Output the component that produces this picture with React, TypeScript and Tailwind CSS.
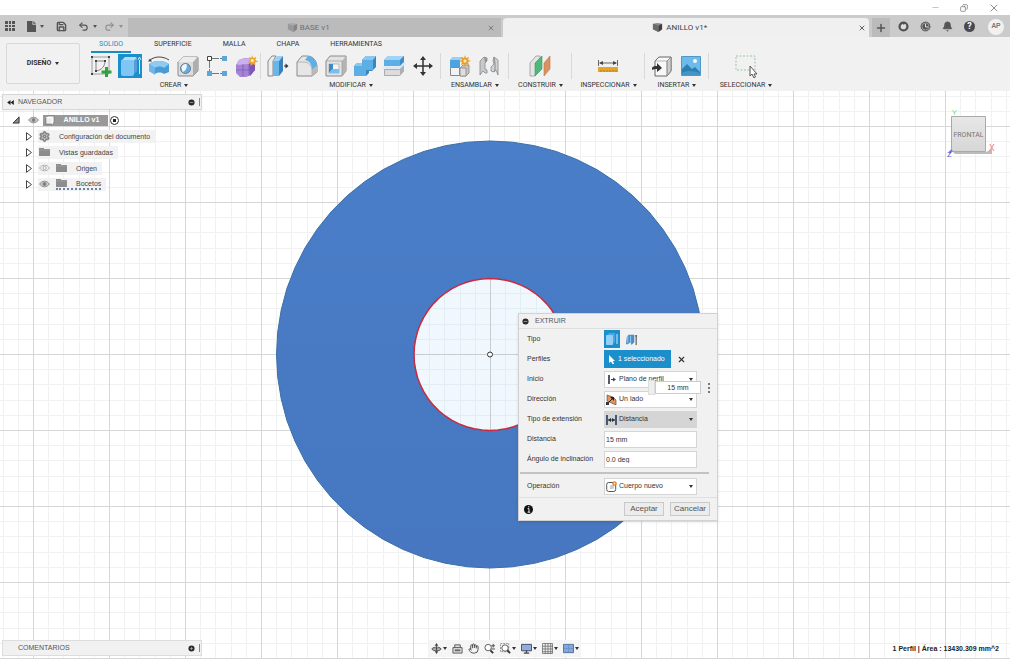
import { Bell, Copy, Hand, Minus, Plus, Redo2, Save, Settings, Undo2, X } from 'lucide-react';
import { useState } from 'react';
import type { ReactNode } from 'react';

const ICON = 'block h-6 w-6 shrink-0';

function Caret({ className = '' }: { className?: string }) {
  return (
    <svg viewBox="0 0 4 3" className={`h-[3px] w-1 shrink-0 ${className}`} aria-hidden="true">
      <path d="M0 0h4L2 3z" fill="currentColor" />
    </svg>
  );
}

/* ---------- ribbon icons ---------- */

const SketchIcon = () => (
  <svg viewBox="0 0 24 24" className={ICON} fill="none">
    <path d="M3 3h17v17H3z" stroke="#8a8a8a" strokeWidth=".8" />
    <path d="M7 7h9M7 7v10M16 7c0 5-3 9-9 10" stroke="#777" strokeWidth=".9" />
    <path d="M2 2h2v2H2zM19 2h2v2h-2zM2 19h2v2H2zM6 6h2v2H6zM15 6h2v2h-2zM6 16h2v2H6z" fill="#444" />
    <path d="M16 13h3v3.500h3.500v3H19V23h-3v-3.500h-3.500v-3H16z" fill="#2fa13e" />
  </svg>
);

const ExtrudeIcon = () => (
  <svg viewBox="0 0 24 24" className={ICON}>
    <path d="M3 7l4-4h10q2 0 2 2l-3 4z" fill="#b3ddf9" />
    <path d="M14 8l5-4v13l-4 4z" fill="#549fd6" />
    <rect x="3" y="6" width="13" height="16" rx="2" fill="#80c6f5" />
    <path d="M21.500 20V6M20 6l1.500-3L23 6" stroke="#cdeafd" fill="none" />
  </svg>
);

const RevolveIcon = () => (
  <svg viewBox="0 0 24 24" className={ICON}>
    <path d="M2 10c5-4 15-4 20 0v8l-5 2c-2-2-7-2-9 0l-6-3z" fill="#4a9ad4" />
    <path d="M2 10c5-4 15-4 20 0l-5 4c-2-2-7-2-9 0z" fill="#8dcbf3" />
    <path d="M2 10l6 4v7l-6-4z" fill="#6cb6ea" />
    <path d="M3 6c5-4 13-4 19 0" stroke="#444" fill="none" />
    <path d="M1 7.500l2-3 2 3z" fill="#444" />
  </svg>
);

const HoleIcon = () => (
  <svg viewBox="0 0 24 24" className={ICON}>
    <path d="M2 8l5-5h14q1 0 1 1v13l-5 5H3q-1 0-1-1z" fill="#dcdcdc" stroke="#8a8a8a" />
    <path d="M17 8l5-5v14l-5 5z" fill="#aeaeae" />
    <path d="M2 8l5-5h14l-4 5z" fill="#ececec" />
    <circle cx="9.500" cy="14.500" r="5" fill="#61ade0" stroke="#6d7d88" />
    <path d="M5.500 13a5 5 0 0 1 5-3c1 4-1 7-4 8z" fill="#f0f8fd" />
  </svg>
);

const PatternIcon = () => (
  <svg viewBox="0 0 24 24" className={ICON} fill="none">
    <path d="M4.500 5v14M5 4.500h14M5 19.500h14" stroke="#777" strokeDasharray="9 1" />
    <path d="M2.500 2.500h4v4h-4z" fill="#fff" stroke="#444" />
    <path d="M17 2h5v5h-5zM17 17h5v5h-5zM2 17h5v5H2z" fill="#5fa6d8" />
  </svg>
);

const FormIcon = () => (
  <svg viewBox="0 0 24 24" className={ICON}>
    <path d="M2 11l3-5 6-2h5l5 4v8l-4 5-5 2H6l-4-4z" fill="#a584d6" />
    <path d="M3 9l3-4 9-1 3 4-4 2-10 1z" fill="#c9b0ee" />
    <path d="M15 10l6-3v9l-5 6z" fill="#7d56b8" />
    <path d="M9 10v12M2 16h13l6-4M15 10v12" stroke="#7450a8" strokeWidth=".6" fill="none" />
    <path d="M18 1l1.300 3 3-1-1 3 2.700 1.500-3 1 .5 3-2.500-1.500L16.500 12v-3l-3-1 2.500-2-1-3 2.500 1z" fill="#eda32c" />
    <circle cx="18.300" cy="6.500" r="1.600" fill="#fff0c7" />
  </svg>
);

const PressPullIcon = () => (
  <svg viewBox="0 0 24 24" className={ICON}>
    <path d="M2 7l4-5h4L7 7v15H2z" fill="#eee" stroke="#888" />
    <path d="M7 7l4-5h6l-4 5z" fill="#9bd1f5" />
    <path d="M7 7h6v15H7z" fill="#66b5eb" />
    <path d="M13 7l4-5v15l-4 5z" fill="#3a83ba" />
    <path d="M18 12h3" stroke="#333" />
    <path d="M19.500 9.500L22.500 12l-3 2.500z" fill="#333" />
  </svg>
);

const FilletIcon = () => (
  <svg viewBox="0 0 24 24" className={ICON}>
    <path d="M2 8l5-6h5c6 0 10 5 10 11v5l-5 4H2z" fill="#e6e6e6" stroke="#8a8a8a" />
    <path d="M10 6l3-4c5 0 9 5 9 10l-5 4c0-5-2-9-7-10z" fill="#62aee4" />
    <path d="M17 16l5-4v6l-5 4z" fill="#bbb" />
    <path d="M2 8h7c5 0 8 4 8 9v5" stroke="#aaa" fill="none" strokeWidth=".8" />
  </svg>
);

const ShellIcon = () => (
  <svg viewBox="0 0 24 24" className={ICON}>
    <path d="M2 7l4-5h16v15l-4 5H2z" fill="#e3e3e3" stroke="#8a8a8a" />
    <path d="M18 7l4-5v15l-4 5z" fill="#b4b4b4" />
    <path d="M2 7h16v15" stroke="#999" fill="none" strokeWidth=".7" />
    <path d="M5 10h10v9H5z" fill="#f4f4f4" stroke="#999" strokeWidth=".6" />
    <path d="M5 10l4 0v5l-4 4z" fill="#3d8cc5" />
    <path d="M9 15h6v4H5z" fill="#78bfee" />
  </svg>
);

const CombineIcon = () => (
  <svg viewBox="0 0 24 24" className={ICON}>
    <path d="M1 12l3-3h5V6l4-4h10v11l-4 4h-3v2l-3 3H1z" fill="#3c86bf" />
    <path d="M1 12l3-3h5V6l4-4h10l-3 4v7h-4z" fill="#8ac8f1" />
    <path d="M1 12h8V6h11v10h-7v6H1z" fill="#5caee5" />
  </svg>
);

const SplitIcon = () => (
  <svg viewBox="0 0 24 24" className={ICON}>
    <path d="M2 6l4-4h16v6l-4 4H2z" fill="#5caee5" />
    <path d="M2 6l4-4h16l-4 4z" fill="#a0d4f6" />
    <path d="M18 6l4-4v6l-4 4z" fill="#3f8cc6" />
    <path d="M2.500 15.500h15l4-4v6l-4 4h-15z" fill="#dcdcdc" stroke="#aaa" />
    <path d="M18 15l4-4v6l-4 5z" fill="#b0b0b0" />
    <path d="M1 13.500h17l5-5" fill="none" stroke="#d5e8f5" strokeWidth="2" />
  </svg>
);

const MoveIcon = () => (
  <svg viewBox="0 0 24 24" className={ICON}>
    <path d="M12 4v16M4 12h16" stroke="#333" strokeWidth="1.500" />
    <path d="M12 2l3 4H9zM12 22l3-4H9zM2 12l4-3v6zM22 12l-4-3v6z" fill="#333" />
  </svg>
);

const ComponentIcon = () => (
  <svg viewBox="0 0 24 24" className={ICON}>
    <path d="M2 6l3-3h10l-3 3v7H2z" fill="#4da3df" />
    <path d="M2 6l3-3h10l-3 3z" fill="#9ad0f4" />
    <path d="M2.500 13.500h9v8h-9z" fill="#f3f3f3" stroke="#888" />
    <path d="M12 14l3-3h6v8l-3 3h-6z" fill="#c4c4c4" stroke="#888" strokeWidth=".8" />
    <path d="M12 14h6v8h-6z" fill="#dedede" stroke="#888" strokeWidth=".8" />
    <path d="M17 1l1 3 3-1-1 3 3 1-3 1 1 3-3-1-1 3-1-3-3 1 1-3-3-1 3-1-1-3 3 1z" fill="#e9a02b" />
    <circle cx="17" cy="7" r="1.500" fill="#ffefc4" />
  </svg>
);

const JointIcon = () => (
  <svg viewBox="0 0 24 24" className={ICON}>
    <path d="M3 7l4-4 3 1v3l-2 2v6l2 1v3H8l-2-2-3 4z" fill="#c6cacd" stroke="#888" strokeWidth=".8" />
    <path d="M7 3l3 1v3L8 9z" fill="#929699" />
    <path d="M21 6l-4-3-1 4 1 3-3 3v4l3 1 2-2 2 5z" fill="#d2d5d8" stroke="#888" strokeWidth=".8" />
    <path d="M17 3l1 6v7l-1 2" fill="none" stroke="#888" />
  </svg>
);

const PlaneIcon = () => (
  <svg viewBox="0 0 24 24" className={ICON}>
    <path d="M2 9l6-7h4v14l-5 6H2z" fill="#e4e4e4" stroke="#999" strokeWidth=".8" />
    <path d="M7 9l7-7v13l-7 7z" fill="#4fb779" stroke="#3d9361" strokeWidth=".6" />
    <path d="M16 9l6-7v13l-6 7z" fill="#dc9163" stroke="#bd7649" strokeWidth=".6" />
  </svg>
);

const MeasureIcon = () => (
  <svg viewBox="0 0 24 24" className={ICON}>
    <path d="M2.500 6v6M21.500 6v6M4 9h16" stroke="#666" fill="none" />
    <path d="M3 9l4-2v4zM21 9l-4-2v4z" fill="#444" />
    <path d="M2 13h20v5H2z" fill="#e5a329" />
    <path d="M5 16v2M8 16v2M11 16v2M14 16v2M17 16v2M20 16v2" stroke="#a87919" strokeWidth=".8" />
  </svg>
);

const InsertIcon = () => (
  <svg viewBox="0 0 24 24" className={ICON}>
    <path d="M5 7l4-4h12v14l-4 5H5z" fill="#f8f8f8" stroke="#666" />
    <path d="M17 7l4-4v14l-4 5z" fill="#ccc" stroke="#777" strokeWidth=".7" />
    <path d="M5 7h12v15" stroke="#999" fill="none" strokeWidth=".7" />
    <path d="M2 16v-2c1-2 3-2 5-2V9l5 5-5 4v-3c-2 0-4 0-5 1z" fill="#333" />
  </svg>
);

const ImageIcon = () => (
  <svg viewBox="0 0 24 24" className={ICON}>
    <path d="M2.500 2.500h19v19h-19z" fill="#6dbbea" stroke="#5097c5" />
    <circle cx="16" cy="7" r="2" fill="#f2f9ff" />
    <path d="M3 15l5-5 5 5 3-2 5 5v3H3z" fill="#2b7fb3" />
    <path d="M3 19c5-3 12-2 18 0v2H3z" fill="#4494c6" />
  </svg>
);

const SelectIcon = () => (
  <svg viewBox="0 0 24 24" className={ICON} fill="none">
    <path d="M2 2h19v14H2z" stroke="#9cc5a6" strokeDasharray="2 1.500" />
    <path d="M16 12v10l2-2 2 4 1.500-1-1.500-3h3z" fill="#fff" stroke="#555" />
  </svg>
);

interface Tool {
  label: string;
  icon: ReactNode;
  active?: boolean;
}

interface ToolGroup {
  name: string;
  width: string;
  tools: Tool[];
}

const groups: ToolGroup[] = [
  {
    name: 'CREAR',
    width: 'w-[174px]',
    tools: [
      { label: 'Crear boceto', icon: <SketchIcon /> },
      { label: 'Extruir', icon: <ExtrudeIcon />, active: true },
      { label: 'Revolución', icon: <RevolveIcon /> },
      { label: 'Agujero', icon: <HoleIcon /> },
      { label: 'Patrón', icon: <PatternIcon /> },
      { label: 'Crear forma', icon: <FormIcon /> },
    ],
  },
  {
    name: 'MODIFICAR',
    width: 'w-[180px]',
    tools: [
      { label: 'Pulsar/tirar', icon: <PressPullIcon /> },
      { label: 'Empalme', icon: <FilletIcon /> },
      { label: 'Vaciado', icon: <ShellIcon /> },
      { label: 'Combinar', icon: <CombineIcon /> },
      { label: 'Dividir', icon: <SplitIcon /> },
      { label: 'Desplazar', icon: <MoveIcon /> },
    ],
  },
  {
    name: 'ENSAMBLAR',
    width: 'w-[68px]',
    tools: [
      { label: 'Nuevo componente', icon: <ComponentIcon /> },
      { label: 'Unión', icon: <JointIcon /> },
    ],
  },
  { name: 'CONSTRUIR', width: 'w-[63px]', tools: [{ label: 'Plano', icon: <PlaneIcon /> }] },
  { name: 'INSPECCIONAR', width: 'w-[73px]', tools: [{ label: 'Medir', icon: <MeasureIcon /> }] },
  {
    name: 'INSERTAR',
    width: 'w-[64px]',
    tools: [
      { label: 'Insertar derivado', icon: <InsertIcon /> },
      { label: 'Imagen', icon: <ImageIcon /> },
    ],
  },
  { name: 'SELECCIONAR', width: 'w-[74px]', tools: [{ label: 'Seleccionar', icon: <SelectIcon /> }] },
];

const ribbonTabs = ['SOLIDO', 'SUPERFICIE', 'MALLA', 'CHAPA', 'HERRAMIENTAS'];

function TitleBar() {
  return (
    <div className="flex h-[15px] items-center justify-end gap-5 bg-white pr-[10px] text-[#666]">
      <button aria-label="Minimizar"><Minus size={9} strokeWidth={1.5} className="text-[#999]" /></button>
      <button aria-label="Restaurar"><Copy size={8} strokeWidth={2} className="-scale-x-100" /></button>
      <button aria-label="Cerrar"><X size={12} strokeWidth={1.5} /></button>
    </div>
  );
}

function DocCube({ dark }: { dark?: boolean }) {
  return (
    <svg viewBox="0 0 12 12" className="h-[11px] w-[11px]" aria-hidden="true">
      <path d="M1 2l5-1 5 1v6l-4 3-6-3z" fill={dark ? '#888' : '#aaa'} />
      <path d="M7 4l4-2v6l-4 3z" fill={dark ? '#3f3f3f' : '#858585'} />
      <path d="M1 2l6 2v7L1 8z" fill={dark ? '#6a6a6a' : '#999'} />
    </svg>
  );
}

const SaveGlyph = () => <Save size={11} strokeWidth={3} />;

function DocumentBar() {
  return (
    <header className="flex h-[22px] items-stretch bg-[#cbcbcb] pt-[3px] text-[#555]">
      <div className="flex w-32 shrink-0 items-center pb-[3px] pl-[5px]">
        <button aria-label="Panel de datos">
          <svg viewBox="0 0 10 10" className="h-[10px] w-[10px]" fill="#555">
            <path d="M0 0h3v3H0zM4 0h2v3H4zM7 0h3v3H7zM0 4h3v2H0zM4 4h2v2H4zM7 4h3v2H7zM0 7h3v3H0zM4 7h2v3H4zM7 7h3v3H7z" />
          </svg>
        </button>
        <button aria-label="Archivo" className="ml-3 flex items-center gap-1">
          <svg viewBox="0 0 10 12" className="h-[11px] w-[9px]"><path d="M0 0h6v4h4v8H0zM7 0l3 3H7z" fill="#555" /></svg>
          <Caret />
        </button>
        <button aria-label="Guardar" className="ml-3"><SaveGlyph /></button>
        <button aria-label="Deshacer" className="ml-[11px] flex items-center gap-1">
          <Undo2 size={11} strokeWidth={2.5} /><Caret />
        </button>
        <button aria-label="Rehacer" className="ml-[7px] flex items-center gap-1 text-[#909090]">
          <Redo2 size={11} strokeWidth={2.5} /><Caret />
        </button>
      </div>
      <div className="flex min-w-0 flex-1 items-center bg-[#bbb] px-[6px] text-[8px] text-[#707070]">
        <button className="flex flex-1 items-center justify-center gap-[2px] pr-1"><DocCube />BASE v1</button>
        <button aria-label="Cerrar BASE v1"><X size={8} strokeWidth={2.5} /></button>
      </div>
      <div className="ml-[2px] flex min-w-0 flex-1 items-center rounded-t-sm bg-[#f0f0f0] px-[3px] text-[8px] text-[#444]">
        <button className="flex flex-1 items-center justify-center gap-[3px] pr-1"><DocCube dark />ANILLO v1*</button>
        <button aria-label="Cerrar ANILLO v1"><X size={8} strokeWidth={2.5} /></button>
      </div>
      <div className="flex shrink-0 items-center pl-[3px]">
        <button aria-label="Nuevo diseño" className="flex h-full w-[18px] items-center justify-center bg-[#bbb]">
          <Plus size={12} strokeWidth={3} />
        </button>
        <div className="flex items-center gap-[11px] pr-[6px] pb-[2px] pl-2">
          <button aria-label="Extensiones">
            <svg viewBox="0 0 12 12" className="h-[11px] w-[11px]">
              <circle cx="6" cy="6" r="5.500" fill="#505050" />
              <path d="M3 5l2-2 1 1 2-1 1 2v2L7.500 9h-3L3 7.500z" fill="#ddd" />
            </svg>
          </button>
          <button aria-label="Estado de trabajos">
            <svg viewBox="0 0 12 12" className="h-[11px] w-[11px]">
              <circle cx="6" cy="6" r="5" fill="#555" stroke="#555" strokeDasharray="1.500 1" />
              <circle cx="6" cy="6" r="3.800" fill="none" stroke="#bbb" strokeWidth=".7" />
              <path d="M6 3v3.500h3" fill="none" stroke="#eee" />
            </svg>
          </button>
          <button aria-label="Notificaciones"><Bell size={11} fill="currentColor" strokeWidth={2} /></button>
          <button aria-label="Ayuda" className="h-[11px] w-[11px] rounded-full bg-[#4a4a4a] text-center text-[9px] leading-[11px] font-bold text-white">?</button>
          <button aria-label="Perfil de usuario" className="-my-px ml-[2px] h-4 w-4 rounded-full bg-[#f1f1f1] text-[7px] text-[#444]">AP</button>
        </div>
      </div>
    </header>
  );
}

function Ribbon() {
  const [tab, setTab] = useState('SOLIDO');

  return (
    <div className="flex h-[54px] items-start bg-[#f1f1f1] text-[7px] text-[#333]">
      <button className="mt-[6px] ml-[6px] flex h-[41px] w-[74px] shrink-0 items-center justify-center gap-1 rounded-xs border border-[#d8d8d8] font-bold">
        DISEÑO <Caret />
      </button>
      <div className="ml-[7px] flex flex-col">
        <nav className="flex h-4 items-start gap-[31px] pl-3">
          {ribbonTabs.map((t) => (
            <button
              key={t}
              onClick={() => setTab(t)}
              className={`h-4 border-b-2 leading-[14px] ${t === tab ? '-mx-2 border-[#1b8bc4] px-2 text-[#1b8bc4]' : 'border-transparent'}`}
            >
              {t}
            </button>
          ))}
        </nav>
        <div className="flex">
          {groups.map((g) => (
            <section key={g.name} className={`flex shrink-0 flex-col items-center ${g.width}`}>
              <div className={`flex h-[26px] w-full items-center justify-center gap-[5px] ${g.name === 'SELECCIONAR' ? '' : 'border-r border-[#d9d9d9]'}`}>
                {g.tools.map((t) => (
                  <button key={t.label} aria-label={t.label} className={t.active ? 'bg-[#1a8fcb]' : ''}>
                    {t.icon}
                  </button>
                ))}
              </div>
              <button className="flex items-center gap-[3px] leading-3">{g.name} <Caret /></button>
            </section>
          ))}
        </div>
      </div>
    </div>
  );
}

/* ---------- canvas ---------- */

const ORIGIN = { x: 490, y: 263.5 };

// the viewport draws circles as faceted outlines
const facets = (r: number, n: number) =>
  Array.from({ length: n }, (_, i) => {
    const a = (i / n) * Math.PI * 2;
    return `${(ORIGIN.x + r * Math.cos(a)).toFixed(1)},${(ORIGIN.y + r * Math.sin(a)).toFixed(1)}`;
  }).join(' ');

function Drawing() {
  return (
    <svg className="absolute inset-0 h-full w-full" aria-label="Boceto del anillo">
      <defs>
        <pattern id="grid" x="33" y="35" width="76" height="76" patternUnits="userSpaceOnUse">
          <path d="M15.500 0v76M30.500 0v76M46.500 0v76M61.500 0v76M0 15.500h76M0 30.500h76M0 46.500h76M0 61.500h76" stroke="#f1f1f1" />
          <path d="M.5 0v76M0 .5h76" stroke="#d6d6d6" />
        </pattern>
        <pattern id="innerGrid" x="490" y="263" width="76" height="76" patternUnits="userSpaceOnUse">
          <path d="M15.500 0v76M30.500 0v76M46.500 0v76M61.500 0v76M0 15.500h76M0 30.500h76M0 46.500h76M0 61.500h76" stroke="#e3edf4" />
          <path d="M.5 0v76M0 .5h76" stroke="#c6ced4" />
        </pattern>
        <linearGradient id="profile" x1="0" y1="0" x2="0" y2="1">
          <stop offset="0" stopColor="#4a7ec8" />
          <stop offset="1" stopColor="#4677c0" />
        </linearGradient>
      </defs>
      <rect width="100%" height="100%" fill="url(#grid)" />
      <polygon points={facets(213.5, 60)} fill="url(#profile)" stroke="#3b6ea5" />
      <polygon points={facets(76, 60)} fill="#f0f8fe" />
      <polygon points={facets(76, 60)} fill="url(#innerGrid)" stroke="#c92a3f" strokeWidth="1.500" />
      <circle cx="490" cy="263.500" r="2.500" fill="#fff" stroke="#333" />
    </svg>
  );
}

function ViewCube() {
  return (
    <svg viewBox="0 0 56 60" className="absolute top-3 right-[10px] h-[60px] w-[56px]" fontFamily="Roboto, sans-serif">
      <defs>
        <linearGradient id="face" x1="0" y1="0" x2="0" y2="1">
          <stop offset="0" stopColor="#e8e8e8" />
          <stop offset="1" stopColor="#d6d6d6" />
        </linearGradient>
      </defs>
      <path d="M9 49h33l6-3v5H11z" fill="#bbb" />
      <path d="M7.500 13.500h34v35h-34z" fill="url(#face)" stroke="#a9a9a9" />
      <text x="24.500" y="34" fontSize="7" textAnchor="middle" fill="#777">FRONTAL</text>
      <text x="8" y="12" fontSize="8" fill="#86dc86">Y</text>
      <text x="45" y="48" fontSize="9" fill="#e98686">X</text>
      <path d="M5 50l3-3" stroke="#7470dc" strokeWidth="2" />
      <text x="3" y="54" fontSize="8" fill="#5f5ad8">Z</text>
    </svg>
  );
}

function PanelDot({ sign = 'minus' }: { sign?: 'minus' | 'plus' }) {
  return (
    <svg viewBox="0 0 8 8" className="h-[7px] w-[7px]">
      <circle cx="4" cy="4" r="3.500" fill="#2b2b2b" />
      <path d={sign === 'minus' ? 'M2 4h4' : 'M2.500 4h3M4 2.500v3'} stroke="#bbb" strokeWidth=".8" />
    </svg>
  );
}

function Eye({ off }: { off?: boolean }) {
  return (
    <svg viewBox="0 0 12 8" className="h-[8px] w-[11px]" fill="none" stroke={off ? '#aaa' : '#888'}>
      <path d="M.7 4C3 0 9 0 11.300 4 9 8 3 8 .7 4z" fill={off ? 'none' : '#ccc'} />
      <circle cx="6" cy="4" r="1.700" fill={off ? 'none' : '#777'} />
    </svg>
  );
}

const Folder = () => (
  <svg viewBox="0 0 11 8" className="h-[8px] w-[11px]"><path d="M0 0h5v1h6v7H0z" fill="#8d8d8d" /><path d="M0 2h11" stroke="#aaa" strokeWidth=".5" /></svg>
);

const treeRows = [
  { name: 'Configuración del documento', icon: 'gear' },
  { name: 'Vistas guardadas', icon: 'folder' },
  { name: 'Origen', icon: 'folder', eye: 'off' },
  { name: 'Bocetos', icon: 'folder', eye: 'on' },
];

function Navigator() {
  return (
    <aside className="relative mt-[3px] ml-[2px] w-[200px] text-[7px] text-[#444]">
      <div className="flex h-4 items-center border border-[#d6d6d6] bg-[#f1f1f1] pr-px pl-1 shadow-xs">
        <button aria-label="Contraer navegador" className="text-[#222]">
          <svg viewBox="0 0 8 6" className="h-[5px] w-[7px]"><path d="M4 0v6L0 3zM8 0v6L4 3z" fill="currentColor" /></svg>
        </button>
        <h2 className="ml-1 flex-1 text-[#555]">NAVEGADOR</h2>
        <button aria-label="Ocultar"><PanelDot /></button>
        <span className="ml-1 h-2 border-l border-[#888]" />
      </div>
      <div className="mt-[2px] ml-[10px] flex h-4 items-center">
        <svg viewBox="0 0 9 9" className="h-[8px] w-[8px]"><path d="M1 8l7-7v7z" fill="#888" stroke="#333" /></svg>
        <button aria-label="Visibilidad" className="mr-1 ml-2"><Eye /></button>
        <div className="flex h-[11px] w-[65px] items-center bg-[#999] pl-[2px]">
          <svg viewBox="0 0 11 11" className="h-[10px] w-[10px]"><path d="M1 3l2-2h7v7l-2 2H1z" fill="#eee" stroke="#666" strokeWidth=".7" /><path d="M1 3h7v7" stroke="#fff" fill="none" /></svg>
          <span className="flex-1 text-center font-bold text-white">ANILLO v1</span>
        </div>
        <input type="radio" name="component" defaultChecked aria-label="Activar componente" className="ml-[2px] h-[9px] w-[9px] appearance-none rounded-full border border-[#333] bg-[radial-gradient(#222_30%,white_40%)]" />
      </div>
      <ul>
        {treeRows.map((row) => (
          <li key={row.name} className="flex h-4 items-center pl-[23px]">
            <button aria-label={`Expandir ${row.name}`}>
              <svg viewBox="0 0 8 9" className="h-[9px] w-[8px]"><path d="M1.500 .7L6.500 4.500l-5 3.800z" fill="#fff" stroke="#444" /></svg>
            </button>
            <div className="ml-[5px] flex h-[13px] items-center bg-[#f2f2f2] pr-[5px] pl-px">
              {row.eye && <button aria-label="Visibilidad" className="mr-[6px]"><Eye off={row.eye === 'off'} /></button>}
              <span className={`flex items-center ${row.name === 'Bocetos' ? 'border-b-2 border-dotted border-[#6684a8]' : ''}`}>
                {row.icon === 'gear' ? <Settings size={11} strokeWidth={4} className="text-[#888]" /> : <Folder />}
                <span className="ml-[9px] leading-[9px]">{row.name}</span>
              </span>
            </div>
          </li>
        ))}
      </ul>
    </aside>
  );
}

/* ---------- extrude dialog ---------- */

const StartGlyph = () => (
  <svg viewBox="0 0 11 11" className="h-[11px] w-[11px]"><path d="M3 1v9" stroke="#223" strokeWidth="1.500" /><path d="M5 5.500h3" stroke="#345" /><path d="M7 3.500l3 2-3 2z" fill="#345" /></svg>
);

const SideGlyph = () => (
  <svg viewBox="0 0 11 11" className="h-[11px] w-[11px]"><path d="M1 1l6 2 3 3v5L1 7z" fill="#df9660" stroke="#5e3620" strokeWidth=".6" /><path d="M1 10l6-6" stroke="#222" /><path d="M4 3l4 0v4z" fill="#222" /><path d="M0 8h3v3H0z" fill="#333" /></svg>
);

const DistanceGlyph = () => (
  <svg viewBox="0 0 11 11" className="h-[11px] w-[11px]"><path d="M1 1v10M10 1v10" stroke="#1f2c4a" strokeWidth="1.500" /><path d="M2 6h7" stroke="#345" /><path d="M2 6l3-2v4zM9 6L6 4v4z" fill="#234" /></svg>
);

const BodyGlyph = () => (
  <svg viewBox="0 0 11 11" className="h-[11px] w-[11px]"><rect x=".7" y="1.500" width="9" height="9" rx="2" fill="#fff" stroke="#555" /><path d="M4 5l1-1h3v3L7 8H4z" fill="#ccc" /><circle cx="8.500" cy="2.500" r="2.300" fill="#e58a32" /><circle cx="8.500" cy="2.500" r=".8" fill="#fff" /></svg>
);

function Row({ label, htmlFor, children }: { label: string; htmlFor: string; children: ReactNode }) {
  return (
    <div className="flex h-5 items-center">
      <label htmlFor={htmlFor} className="w-[77px] shrink-0">{label}</label>
      {children}
    </div>
  );
}

function IconSelect({ id, value, icon, muted }: { id: string; value: string; icon: ReactNode; muted?: boolean }) {
  return (
    <div className={`relative flex h-[17px] w-[93px] items-center border border-[#d5d5d5] ${muted ? 'bg-[#d5d5d5]' : 'bg-white'}`}>
      <span className="pointer-events-none absolute left-px">{icon}</span>
      <select id={id} defaultValue={value} className="h-full w-full appearance-none pl-[14px] outline-none">
        <option>{value}</option>
      </select>
      <Caret className="pointer-events-none absolute right-[3px]" />
    </div>
  );
}

function ExtrudeDialog() {
  const [distance, setDistance] = useState('15 mm');
  const [angle, setAngle] = useState('0.0 deg');

  return (
    <form
      className="absolute top-[222px] left-[518px] w-[200px] border border-[#d2d2d2] bg-[#f1f1f1] text-[7px] text-[#333] shadow-sm"
      onSubmit={(e) => e.preventDefault()}
    >
      <div className="flex h-[15px] items-center gap-[6px] border-b border-[#dedede] pl-[3px] text-[#555]">
        <PanelDot />
        <h2>EXTRUIR</h2>
      </div>
      <div className="pl-2">
        <Row label="Tipo" htmlFor="type-single">
          <button id="type-single" type="button" aria-label="Extrusión" className="flex h-[18px] w-4 items-center justify-center bg-[#1a8fcb]">
            <svg viewBox="0 0 14 14" className="h-[14px] w-[14px]"><path d="M1 4l3-3h6v9l-3 3H1z" fill="#4aa4dd" /><rect x="1" y="3" width="7" height="10" rx="1" fill="#93d0f8" /><path d="M12 2v10" stroke="#c9eaff" /></svg>
          </button>
          <button type="button" aria-label="Extrusión fina" className="ml-[5px]">
            <svg viewBox="0 0 14 14" className="h-[13px] w-[13px]"><path d="M2 4l2-2h6v8l-3 3-1-3-3 2H1z" fill="#4b8fca" /><path d="M3 3v8M6 3v8" stroke="#9dccef" /><path d="M12 3v10M11 3h2" stroke="#333" /></svg>
          </button>
        </Row>
        <Row label="Perfiles" htmlFor="profiles">
          <button id="profiles" type="button" className="flex h-[18px] w-[67px] items-center gap-[3px] bg-[#1a8fcb] pl-[5px] text-white">
            <svg viewBox="0 0 6 9" className="h-[9px] w-[6px]"><path d="M0 0l6 6H4l1 3-1.500 0L2 6.500 0 8z" fill="#fff" /></svg>
            1 seleccionado
          </button>
          <button type="button" aria-label="Borrar selección" className="ml-[6px]"><X size={9} strokeWidth={3} /></button>
        </Row>
        <Row label="Inicio" htmlFor="start"><IconSelect id="start" value="Plano de perfil" icon={<StartGlyph />} /></Row>
        <Row label="Dirección" htmlFor="direction"><IconSelect id="direction" value="Un lado" icon={<SideGlyph />} /></Row>
        <Row label="Tipo de extensión" htmlFor="extent"><IconSelect id="extent" value="Distancia" icon={<DistanceGlyph />} muted /></Row>
        <Row label="Distancia" htmlFor="distance">
          <input id="distance" value={distance} onChange={(e) => setDistance(e.target.value)} className="h-[17px] w-[93px] border border-[#d5d5d5] bg-white pl-px outline-none" />
        </Row>
        <Row label="Ángulo de inclinación" htmlFor="angle">
          <input id="angle" value={angle} onChange={(e) => setAngle(e.target.value)} className="h-[17px] w-[93px] border border-[#d5d5d5] bg-white pl-px outline-none" />
        </Row>
      </div>
      <hr className="mt-[3px] mr-2 ml-px border-t-2 border-[#c2c2c2]" />
      <div className="mt-[2px] pb-px pl-2">
        <Row label="Operación" htmlFor="operation"><IconSelect id="operation" value="Cuerpo nuevo" icon={<BodyGlyph />} /></Row>
      </div>
      <div className="flex h-[23px] items-center gap-[6px] border-t border-[#e0e0e0] pr-[7px] pl-[5px] text-[8px] text-[#555]">
        <button type="button" aria-label="Información" className="mr-auto">
          <svg viewBox="0 0 10 10" className="h-[9px] w-[9px]"><circle cx="5" cy="5" r="5" fill="#111" /><path d="M4 4h1.500v4M4 8h3M4.500 2h1.500" stroke="#fff" fill="none" /></svg>
        </button>
        <button type="submit" className="h-[14px] w-10 border border-[#c9c9c9] bg-[#ececec] leading-3">Aceptar</button>
        <button type="button" className="h-[14px] w-10 border border-[#c9c9c9] bg-[#ececec] leading-3">Cancelar</button>
      </div>
      {/* in-canvas manipulator value, floats over the dialog */}
      <div className="absolute top-[66px] left-[129px] flex h-[15px] items-center">
        <span className="h-full w-[7px] border border-[#ddd] bg-[#eee]" />
        <input aria-label="Valor de distancia" value={distance} onChange={(e) => setDistance(e.target.value)} className="h-[13px] w-[46px] border border-[#ccc] bg-white text-center outline-none" />
        <button type="button" aria-label="Más opciones" className="ml-[7px]">
          <svg viewBox="0 0 3 11" className="h-[11px] w-[3px]" fill="#777"><path d="M0 1h2v2H0zM0 5h2v2H0zM0 9h2v2H0z" /></svg>
        </button>
      </div>
    </form>
  );
}

/* ---------- bottom ---------- */

const viewTools = [
  {
    label: 'Orbitar',
    menu: true,
    icon: <><path d="M6 1v10M1 6.500h10" stroke="#444" /><ellipse cx="6" cy="6.500" rx="5" ry="2" fill="none" stroke="#555" /><path d="M4 3l2-3 2 3zM4 9l2 3 2-3z" fill="#444" /></>,
  },
  {
    label: 'Mirar a',
    icon: <><path d="M1 5h10v6H1zM3 5V2h6v3" fill="#ddd" stroke="#555" /><path d="M3 7h6v2H3z" fill="#666" /></>,
  },
  { label: 'Encuadre', icon: <Hand size={12} strokeWidth={2} color="#444" /> },
  {
    label: 'Zoom',
    icon: <><circle cx="4.500" cy="5" r="3.500" fill="#fff" stroke="#555" /><path d="M7 8l3 3" stroke="#333" strokeWidth="2" /><path d="M8 3h4M10 1v4M8 6.500h4" stroke="#444" /></>,
  },
  {
    label: 'Ajustar',
    menu: true,
    icon: <><path d="M.5.5h9v9h-9z" fill="none" stroke="#888" strokeDasharray="2 1" /><circle cx="5.500" cy="5.500" r="3.500" fill="#fff" stroke="#555" /><path d="M8 8l3 3" stroke="#333" strokeWidth="2" /></>,
  },
  {
    label: 'Visualización',
    menu: true,
    icon: <><path d="M.5 1.500h11v7H.5z" fill="#8cafe0" stroke="#445" /><path d="M6 8v3M3 11h6" stroke="#445" strokeWidth="1.500" /></>,
  },
  {
    label: 'Rejilla',
    menu: true,
    icon: <path d="M.5.5h11v11H.5zM3.500 0v12M6.500 0v12M9.500 0v12M0 3.500h12M0 6.500h12M0 9.500h12" fill="#eee" stroke="#666" strokeWidth=".8" />,
  },
  {
    label: 'Ventanas gráficas',
    menu: true,
    icon: <><path d="M.5 1.500h11v9H.5z" fill="#82a8dc" stroke="#4c6b9b" /><path d="M6 2v8M1 6h10" stroke="#6d93c9" /></>,
  },
];

function BottomBar() {
  return (
    <footer className="relative mt-auto grid h-[19px] grid-cols-[1fr_auto_1fr] items-start text-[7px]">
      <div className="ml-[2px] flex h-4 w-[200px] items-center border border-[#ddd] bg-[#f1f1f1] pr-px pl-[15px] text-[#555]">
        <h2 className="flex-1">COMENTARIOS</h2>
        <button aria-label="Mostrar comentarios"><PanelDot sign="plus" /></button>
        <span className="ml-1 h-2 border-l border-[#888]" />
      </div>
      <div className="flex h-[17px] items-center gap-[5px] bg-[#f5f5f5] px-[2px]">
        {viewTools.map((t) => (
          <button key={t.label} aria-label={t.label} className="flex items-center gap-px text-[#333]">
            <svg viewBox="0 0 12 12" className="h-[11px] w-[11px]">{t.icon}</svg>
            {t.menu && <Caret />}
          </button>
        ))}
      </div>
      <p className="pr-[11px] text-right leading-[17px] font-bold text-[#222]">1 Perfil | Área : 13430.309 mm^2</p>
    </footer>
  );
}

function App() {
  return (
    <div className="flex min-h-screen flex-col bg-white font-['Roboto',sans-serif]">
      <TitleBar />
      <DocumentBar />
      <Ribbon />
      <main className="relative flex flex-1 flex-col overflow-hidden font-['Liberation_Sans',Arial,sans-serif]">
        <Drawing />
        <Navigator />
        <ViewCube />
        <ExtrudeDialog />
        <BottomBar />
      </main>
    </div>
  );
}

export default App;
